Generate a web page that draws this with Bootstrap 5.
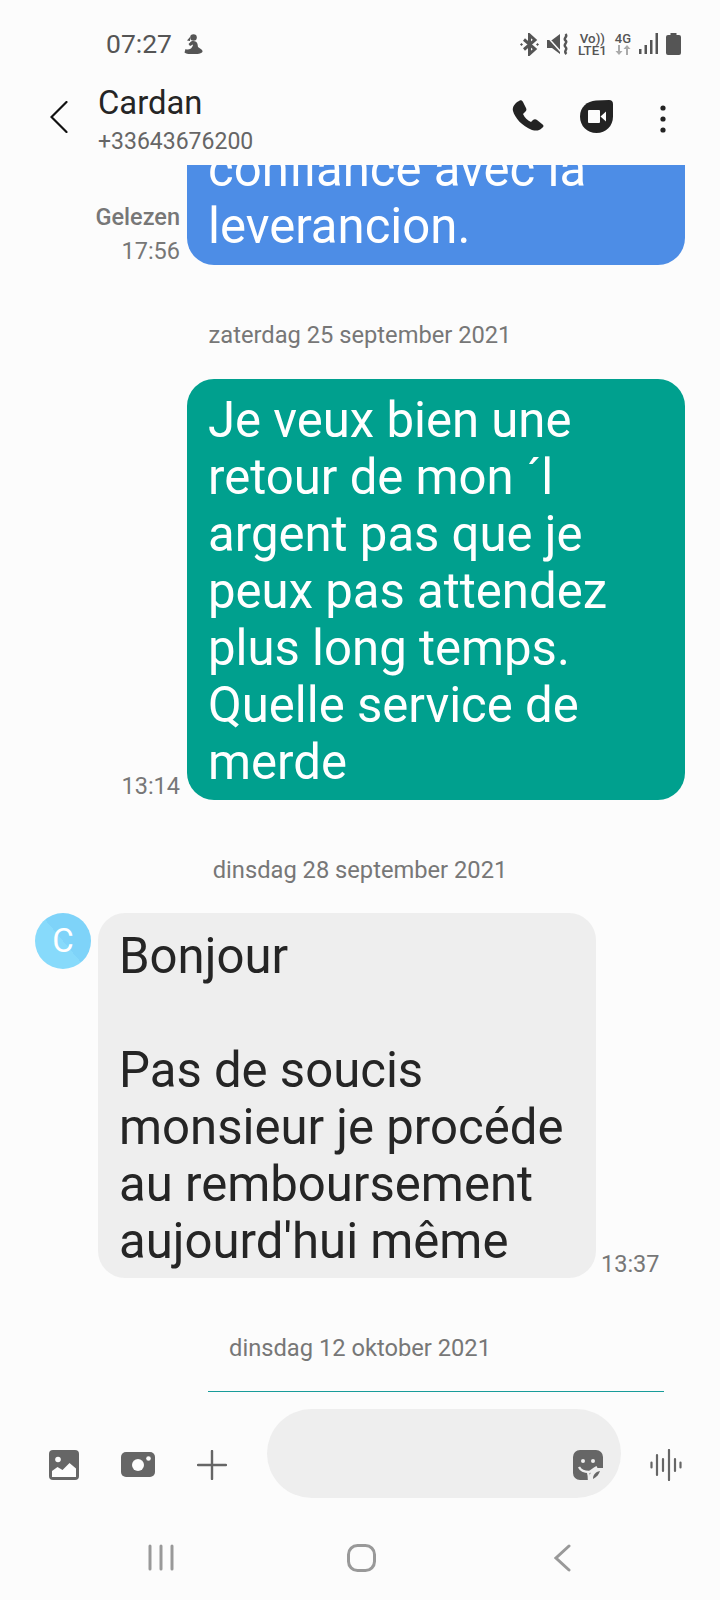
<!DOCTYPE html>
<html lang="nl">
<head>
  <meta charset="UTF-8" />
  <meta name="viewport" content="width=device-width, initial-scale=1.0"/>
  <title>Cardan</title>
  <link href="https://cdn.jsdelivr.net/npm/bootstrap@5.3.0/dist/css/bootstrap.min.css" rel="stylesheet"/>
  <style>
    body { font-family: Roboto, sans-serif; background: #fcfcfc; color: #252525; }
    svg { display: block; flex: none; }
    .screen { width: 720px; height: 1600px; overflow: hidden; }
    .status-row { height: 70px; padding: 29px 39px 0 106px; color: #555; }
    .status-time { font-size: 26.500px; line-height: 30px; }
    .status-figure { margin-left: 12px; }
    .status-icons { margin-top: 4px; }
    .net-text { font-size: 13.300px; line-height: 12px; font-weight: 500; text-align: center; }
    .net-text-4g { font-size: 13px; }
    .top-row { height: 95px; padding-left: 50px; }
    .back-icon { margin-top: 31px; }
    .contact-box { margin-left: 30px; }
    .contact-name { font-size: 32.800px; line-height: 38px; margin-top: 14px; }
    .contact-num { font-size: 23px; line-height: 28px; color: #666; margin-top: 6px; }
    .top-actions { padding: 30px 54px 0 0; }
    .phone-icon { margin-right: -1px; }
    .video-icon { margin-left: 36px; }
    .dots-icon { margin-left: 47px; margin-top: 5px; }
    .thread { height: 1227px; overflow: hidden; }
    .msg-right { padding-right: 35px; }
    .bubble { width: 498px; flex: none; border-radius: 27px; padding: 13px 21px 9px; font-size: 49.100px; line-height: 57px; }
    .bubble-blue { background: #4d8de6; color: #fff; padding-bottom: 10px; }
    .bubble-green { background: #00a08e; color: #fff; }
    .bubble-grey { background: #eee; color: #252525; margin-left: 7px; padding-top: 15px; padding-bottom: 8px; }
    .msg-time { font-size: 23.500px; line-height: 26px; color: #777; text-align: right; padding-bottom: 1px; margin-right: -1px; }
    .msg-time-read { line-height: 34px; padding-bottom: 0; margin-bottom: -3px; }
    .read-label { font-weight: 500; }
    .msg-time-left { padding-left: 5px; margin-right: 0; }
    .date-line { height: 113px; padding-top: 28px; font-size: 23.700px; color: #777; }
    .date-first { height: 114px; }
    .msg-left { padding-left: 35px; }
    .avatar-c { width: 56px; height: 56px; border-radius: 50%; flex: none; font-size: 33px; color: #fff; background: linear-gradient(50deg, #87dafb 50%, #7ed3f9 50%); }
    .next-edge { width: 456px; height: 1px; margin-right: 21px; background: #189c9a; }
    .input-row { height: 130px; padding: 17px 0 0 49px; }
    .tool-image { margin-top: 41px; }
    .tool-camera { margin: 43px 0 0 42px; }
    .tool-plus { margin: 41px 0 0 42px; }
    .input-pill { width: 354px; height: 89px; margin-left: 40px; border-radius: 45px; background: #eee; padding: 41px 18px 0 0; }
    .tool-voice { margin: 40px 0 0 29px; }
    .nav-row { height: 78px; padding: 22px 0 0 60px; }
    .nav-slot { width: 201px; }
  </style>
</head>
<body>
<div class="screen d-flex flex-column">

  <div class="status-row d-flex justify-content-between align-items-start flex-shrink-0">
    <div class="d-flex align-items-center status-time">
      <span>07:27</span>
      <svg class="status-figure" width="19" height="20" viewBox="0 0 19 20" fill="#555"><circle cx="9.500" cy="3.500" r="3.300"/><path d="M6 3L3 6.500l3 .5zM7 7.500c3-1 6 0 6.500 2.500l.5 3 3.500 2.500c1 1 1.500 2 .5 3-2 1.200-4 1.500-6 1.500H6c-2 0-4-.5-5.500-1.500L1.500 15c2 1 3.500.5 5.500-.5C8 13 9 12 9 10.500l-3 1.500 -1.500-2z"/></svg>
    </div>
    <div class="status-icons d-flex align-items-start">
      <svg width="19" height="23" viewBox="0 0 19 23" fill="none" stroke="#555" stroke-width="3"><path d="M4 6.500l11 9.500-5.500 5V2L15 7 4 16.500"/><circle cx="1.500" cy="11.500" r=".8" fill="#555" stroke-width="1"/><circle cx="17.500" cy="11.500" r=".8" fill="#555" stroke-width="1"/></svg>
      <svg class="ms-2" width="23" height="22" viewBox="0 0 23 22"><path fill="#555" d="M0 7h5l8-6v20l-8-6H0z"/><path fill="none" stroke="#fcfcfc" stroke-width="1.500" d="M0 3.500L14 19"/><path fill="none" stroke="#555" stroke-width="2.400" d="M18.500 1c3 3-3 4 0 6.500s-3 3.500 0 6.500-3 3.500 1 7"/></svg>
      <div class="net-text ms-2"><div>Vo))</div><div>LTE1</div></div>
      <div class="net-text net-text-4g ms-2">
        <div>4G</div>
        <svg width="16" height="10" viewBox="0 0 16 10" fill="#aaa"><path d="M3 0h2v6h2.500L4 10 .5 6H3zM11 4H8.500L12 0l3.500 4H13v6h-2z"/></svg>
      </div>
      <svg class="ms-2" width="19" height="21" viewBox="0 0 19 21" fill="#555"><rect y="16" width="2.500" height="5"/><rect x="5.500" y="12" width="2.500" height="9"/><rect x="11" y="7" width="2.500" height="14"/><rect x="16.500" y="0" width="2.500" height="21"/></svg>
      <svg class="ms-2" width="15" height="22" viewBox="0 0 15 22" fill="#555"><path d="M4.500 0h6v2H13a2 2 0 0 1 2 2v16a2 2 0 0 1-2 2H2a2 2 0 0 1-2-2V4a2 2 0 0 1 2-2h2.500z"/></svg>
    </div>
  </div>

  <div class="top-row d-flex flex-shrink-0">
    <svg class="back-icon" width="18" height="32" viewBox="0 0 18 32" fill="none" stroke="#111" stroke-width="2.200" stroke-linecap="round"><path d="M16.500 1L1.500 16l15 15"/></svg>
    <div class="contact-box">
      <div class="contact-name">Cardan</div>
      <div class="contact-num">+33643676200</div>
    </div>
    <div class="top-actions ms-auto d-flex align-items-start">
      <svg class="phone-icon" width="33" height="33" viewBox="0 0 33 33" fill="#232323"><path d="M7 1C8 0 10 0 11 2l3 6c1 2 0 3-1 4l-2 2c2 4 4 6 8 8l2-2c1-1 3-1 4 0l5 4c2 1 2 3 0 4-3 3-6 3-10 2C10 26 3 18 1 11 0 7 3 3 7 1z"/></svg>
      <svg class="video-icon" width="33" height="33" viewBox="0 0 33 33"><path fill="#232323" d="M16.500 33C7 33 0 26 0 16.500 0 7 7 1 16 .5L29 0c2.500 0 4 1.500 4 4v12.500C33 26 26 33 16.500 33z"/><path fill="#fcfcfc" d="M9 10h10a1 1 0 0 1 1 1v11a1 1 0 0 1-1 1H9a1 1 0 0 1-1-1V11a1 1 0 0 1 1-1zM20.500 16.500l5.500-5v10z"/></svg>
      <svg class="dots-icon" width="6" height="28" viewBox="0 0 6 28" fill="#232323"><circle cx="3" cy="3" r="2.600"/><circle cx="3" cy="14" r="2.600"/><circle cx="3" cy="25" r="2.600"/></svg>
    </div>
  </div>

  <div class="thread d-flex flex-column justify-content-end flex-shrink-0">
    <div class="msg-right d-flex justify-content-end align-items-end gap-2 flex-shrink-0">
      <div class="msg-time msg-time-read"><div class="read-label">Gelezen</div><div>17:56</div></div>
      <div class="bubble bubble-blue">confiance avec la<br>leverancion.</div>
    </div>
    <div class="date-line date-first d-flex align-items-center justify-content-center flex-shrink-0">zaterdag 25 september 2021</div>
    <div class="msg-right d-flex justify-content-end align-items-end gap-2 flex-shrink-0">
      <div class="msg-time">13:14</div>
      <div class="bubble bubble-green">Je veux bien une<br>retour de mon ´l<br>argent pas que je<br>peux pas attendez<br>plus long temps.<br>Quelle service de<br>merde</div>
    </div>
    <div class="date-line d-flex align-items-center justify-content-center flex-shrink-0">dinsdag 28 september 2021</div>
    <div class="msg-left d-flex align-items-start flex-shrink-0">
      <div class="avatar-c d-flex align-items-center justify-content-center">C</div>
      <div class="bubble bubble-grey">Bonjour<br><br>Pas de soucis<br>monsieur je procéde<br>au remboursement<br>aujourd'hui même</div>
      <div class="msg-time msg-time-left align-self-end">13:37</div>
    </div>
    <div class="date-line d-flex align-items-center justify-content-center flex-shrink-0">dinsdag 12 oktober 2021</div>
    <div class="msg-right d-flex justify-content-end flex-shrink-0">
      <div class="next-edge"></div>
    </div>
  </div>

  <div class="input-row d-flex align-items-start flex-shrink-0">
    <svg class="tool-image" width="30" height="30" viewBox="0 0 30 30"><rect width="30" height="30" rx="4" fill="#666"/><circle cx="9" cy="9.500" r="2.800" fill="#fcfcfc"/><path fill="#fcfcfc" d="M3 27v-6l5.500-4 5 3 7-7 6.500 5.500V27z"/></svg>
    <svg class="tool-camera" width="34" height="25" viewBox="0 0 34 25"><rect width="34" height="25" rx="5" fill="#666"/><circle cx="17" cy="13" r="6" fill="#fcfcfc"/><circle cx="27.500" cy="6.500" r="2.300" fill="#fcfcfc"/></svg>
    <svg class="tool-plus" width="30" height="30" viewBox="0 0 30 30" stroke="#666" stroke-width="2.400" stroke-linecap="round"><path d="M15 1v28M1 15h28"/></svg>
    <div class="input-pill d-flex justify-content-end">
      <svg width="30" height="30" viewBox="0 0 30 30"><path fill="#666" d="M7 0h16a7 7 0 0 1 7 7v11H23c-3 0-6 3-7 12H7a7 7 0 0 1-7-7V7a7 7 0 0 1 7-7z"/><circle cx="10" cy="11" r="2" fill="#eee"/><circle cx="20" cy="11" r="2" fill="#eee"/><path fill="none" stroke="#eee" stroke-width="2.400" d="M6 17c2 4 7 5 10 5 2 0 4-3 8-5M15 22c1 3 1 5 1 8"/><path fill="#666" d="M20 29c0-4 2-7 7-8-1 3-3 6-7 8z"/></svg>
    </div>
    <svg class="tool-voice" width="32" height="32" viewBox="0 0 32 32" stroke="#666" stroke-width="2.200" stroke-linecap="round"><path d="M1.500 13.500v5M7 6v20M13 10v12M19 1v30M25 10v12M30.500 13.500v5"/></svg>
  </div>

  <div class="nav-row d-flex align-items-start flex-shrink-0">
    <div class="nav-slot d-flex justify-content-center"><svg width="26" height="27" viewBox="0 0 26 27" stroke="#999" stroke-width="3" stroke-linecap="round"><path d="M2 2v23M13 2v23M24 2v23"/></svg></div>
    <div class="nav-slot d-flex justify-content-center"><svg width="29" height="28" viewBox="0 0 29 28" fill="none" stroke="#999" stroke-width="3"><rect x="1.500" y="1.500" width="26" height="25" rx="9"/></svg></div>
    <div class="nav-slot d-flex justify-content-center"><svg width="17" height="28" viewBox="0 0 17 28" fill="none" stroke="#999" stroke-width="3" stroke-linecap="round"><path d="M15 2L2 14l13 12"/></svg></div>
  </div>

</div>
</body>
</html>
